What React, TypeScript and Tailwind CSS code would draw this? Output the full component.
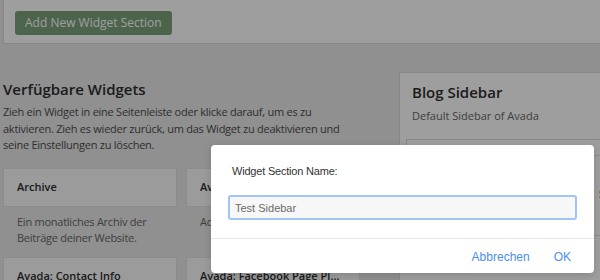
export default function App() {
  return (
    <div className="relative w-[600px] h-[280px] overflow-hidden bg-[#e8e8e8] font-['Open_Sans',sans-serif]">
      {/* top bar with the add button */}
      <div className="ml-[3px] h-[44px] bg-white border-b border-l border-[#dcdcdc] pt-[9px] pl-[11px]">
        <button className="h-[24px] px-[10px] rounded-[3px] bg-[#7aa27a] text-white text-[12px] leading-[24px]">
          Add New Widget Section
        </button>
      </div>

      <div className="flex">
        {/* available widgets */}
        <div className="ml-[3px] w-[357px] pt-[35px] shrink-0">
          <h2 className="text-[15px] leading-[20px] font-semibold text-[#2e2e2e]">Verfügbare Widgets</h2>
          <p className="mt-[5px] text-[11px] leading-[16.5px] tracking-[-0.25px] text-[#4c4c4c]">
            Zieh ein Widget in eine Seitenleiste oder klicke darauf, um es zu aktivieren. Zieh es wieder zurück, um das Widget zu deaktivieren und seine Einstellungen zu löschen.
          </p>
          <div className="mt-[14px] grid grid-cols-2 gap-x-[9px]">
            <WidgetItem title="Archive" desc="Ein monatliches Archiv der Beiträge deiner Website." />
            <WidgetItem title="Avada: Ad 125x125" desc="Adds 125x125 ads." />
            <WidgetItem title="Avada: Contact Info" desc="" />
            <WidgetItem title="Avada: Facebook Page Plugin" desc="" />
          </div>
        </div>

        {/* sidebar area */}
        <div className="ml-[39px] mt-[28px] flex-1 bg-white border-t border-l border-[#dcdcdc] pt-[9px] h-[260px]">
          <h3 className="pl-[12px] text-[15px] leading-[20px] font-semibold text-[#2e2e2e]">Blog Sidebar</h3>
          <p className="pl-[12px] mt-[6px] text-[11px] leading-[16.5px] text-[#666]">Default Sidebar of Avada</p>
          <div className="ml-[6px] mt-[14px] border-t border-l border-[#dcdcdc]">
            <div className="h-[16px] border-b border-[#e2e2e2]" />
            <div className="h-[80px] border-b border-[#e2e2e2] pl-[192px] pt-[30px] text-[11px] font-semibold text-[#333]">
              Suche
            </div>
          </div>
        </div>
      </div>

      {/* modal overlay */}
      <div className="absolute inset-0 bg-black/[0.38]" />

      <div className="absolute left-[211px] top-[145px] w-[383px] h-[128px] bg-white rounded-[4px] shadow-[0_2px_8px_rgba(0,0,0,0.15)] font-['Liberation_Sans',Arial,sans-serif] flex flex-col">
        <div className="px-[17px] pt-[20px] pb-[18px] border-b border-[#e6e6e6]">
          <label className="block pl-[4px] text-[11px] leading-[13px] tracking-[-0.2px] text-[#333]">Widget Section Name:</label>
          <input
            className="mt-[17px] block w-full h-[25px] rounded-[3px] border-2 border-[#9fc4f6] bg-[#f7f7f7] pl-[5px] text-[11px] text-[#6b6b6b] outline-none"
            defaultValue="Test Sidebar"
          />
        </div>
        <div className="flex-1 flex items-center justify-end gap-[24px] pr-[23px] pt-[2px] text-[12px] text-[#4a8ef0]">
          <span>Abbrechen</span>
          <span>OK</span>
        </div>
      </div>
    </div>
  );
}

function WidgetItem({ title, desc }: { title: string; desc: string }) {
  return (
    <div>
      <div className="h-[39px] border border-[#e2e2e2] bg-[#fafafa] px-[13px] flex items-center">
        <span className="truncate text-[11px] font-semibold text-[#2e2e2e]">{title}</span>
      </div>
      <p className="px-[14px] pt-[7px] pb-[11px] h-[50px] text-[11px] leading-[16px] tracking-[-0.25px] text-[#666]">{desc}</p>
    </div>
  );
}
